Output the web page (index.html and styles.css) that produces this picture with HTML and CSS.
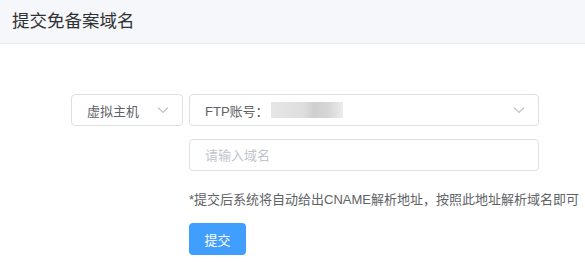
FILE: index.html
```html
<html>
<head>
    <meta charset="UTF-8">
    <title>提交免备案域名</title>
    <link rel="stylesheet" href="styles.css">
</head>
<body>
    <div class="page-header">提交免备案域名</div>
    <div class="form">
        <div class="select small">
            <span class="value">虚拟主机</span>
            <svg class="arrow" viewBox="0 0 12 8"><path d="M1 1.5 L6 6.5 L11 1.5" fill="none" stroke="#c0c4cc" stroke-width="1.2"/></svg>
        </div>
        <div class="select wide">
            <span class="value">FTP账号：<span class="masked"></span></span>
            <svg class="arrow" viewBox="0 0 12 8"><path d="M1 1.5 L6 6.5 L11 1.5" fill="none" stroke="#c0c4cc" stroke-width="1.2"/></svg>
        </div>
        <input class="text-input" type="text" placeholder="请输入域名">
        <div class="tip">*提交后系统将自动给出CNAME解析地址，按照此地址解析域名即可</div>
        <button class="submit" type="button">提交</button>
    </div>
</body>
</html>
```

FILE: styles.css
```css
body {
    margin: 0;
    font-family: "Liberation Sans", "Noto Sans CJK SC", sans-serif;
    color: #606266;
    background: #fff;
    overflow: hidden;
}

.page-header {
    height: 43px;
    line-height: 43px;
    padding-left: 12px;
    font-size: 17.5px;
    color: #303133;
    background-color: #f5f7fa;
    border-bottom: 1px solid #e8eaee;
}

.form {
    display: grid;
    grid-template-columns: 112px 350px;
    column-gap: 6px;
    padding: 50px 0 0 71px;
}

.select,
.text-input {
    box-sizing: border-box;
    height: 32px;
    border: 1px solid #dcdfe6;
    border-radius: 4px;
    font-size: 13px;
    background: #fff;
}

.select {
    display: flex;
    align-items: center;
    justify-content: space-between;
    padding: 0 13px 0 15px;
}

.select .value {
    display: flex;
    align-items: center;
    color: #606266;
}

.masked {
    display: inline-block;
    width: 72px;
    height: 16px;
    margin-left: 2px;
    background: linear-gradient(90deg, #e6e6e6 0%, #dedede 45%, #cfcfcf 60%, #d6d6d6 80%, #ececec 100%);
}

.arrow {
    width: 12px;
    height: 8px;
}

.text-input {
    grid-column: 2;
    margin-top: 13px;
    padding: 0 15px;
    font-family: inherit;
    outline: none;
}

.text-input::placeholder {
    color: #c0c4cc;
}

.tip {
    grid-column: 2;
    margin-top: 19px;
    font-size: 13px;
    line-height: 20px;
    white-space: nowrap;
    color: #606266;
}

.submit {
    grid-column: 2;
    justify-self: start;
    width: 57px;
    height: 32px;
    margin-top: 13px;
    border: none;
    border-radius: 4px;
    background-color: #409eff;
    color: #fff;
    font-size: 13px;
    font-family: inherit;
    cursor: pointer;
}
```
